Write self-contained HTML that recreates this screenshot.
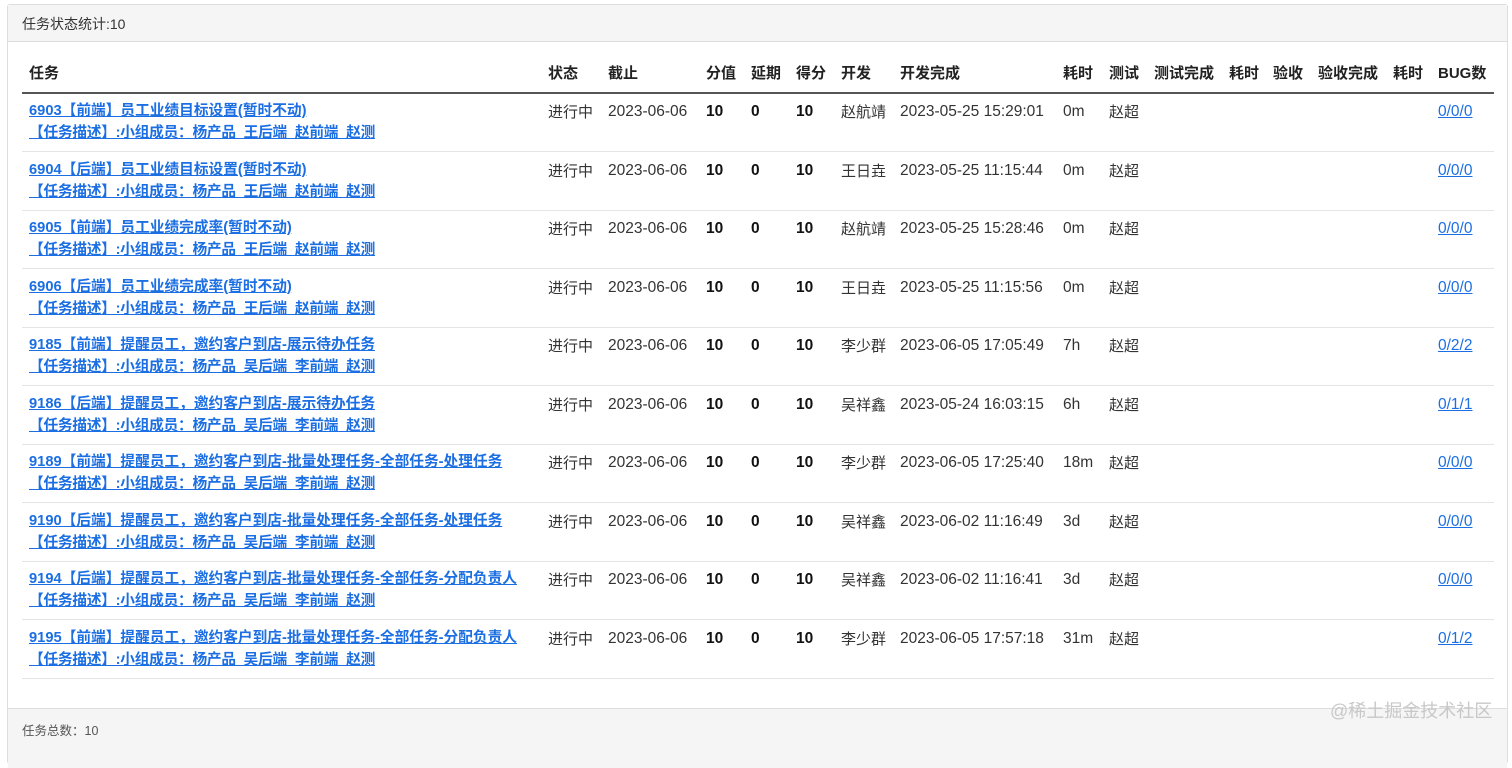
<!DOCTYPE html>
<html><head><meta charset="utf-8"><style>
*{margin:0;padding:0;box-sizing:border-box}
body{width:1512px;height:741px;background:#fff;font-family:"Liberation Sans","Noto Sans CJK SC",sans-serif;font-size:15px;color:#333;position:relative;overflow:hidden}
.panel{position:absolute;left:7px;top:4px;width:1501px;height:760px;border:1px solid #ddd;border-radius:3px}
.ph{position:absolute;left:0;top:0;right:0;height:37px;background:#f5f5f5;border-bottom:1px solid #ddd;padding:9px 14px;font-size:14px;color:#333}
.pf{position:absolute;left:0;top:703px;right:0;height:60px;background:#f5f5f5;border-top:1px solid #ddd;padding:11px 14px;font-size:12.5px;color:#555}
.c{position:absolute;white-space:nowrap;line-height:20px}
.th{font-weight:bold;color:#222;top:64px}
.hl{position:absolute;left:22px;top:92px;width:1472px;height:2px;background:#555}
.row{position:absolute;left:0;width:1512px;height:59px}
.row .sep{position:absolute;left:22px;width:1472px;top:57px;height:1px;background:#e4e4e4}
.row .c{top:9px}
.row .n{top:8px;font-size:15.5px}
a{color:#1c6fe3;font-weight:bold;text-decoration:underline}
.b{font-weight:bold;color:#111}
.bug{color:#1c6fe3;text-decoration:underline}
.wm{position:absolute;left:1330px;top:697px;font-size:18px;color:#c8c8c8}
.row .t{line-height:22px;top:6px;font-size:14.7px}
.t a+br+a{letter-spacing:-0.25px}
</style></head><body>
<div class="panel"><div class="ph">任务状态统计:10</div><div class="pf">任务总数：10</div></div>
<div class="c th" style="left:29px">任务</div>
<div class="c th" style="left:548px">状态</div>
<div class="c th" style="left:608px">截止</div>
<div class="c th" style="left:706px">分值</div>
<div class="c th" style="left:751px">延期</div>
<div class="c th" style="left:796px">得分</div>
<div class="c th" style="left:841px">开发</div>
<div class="c th" style="left:900px">开发完成</div>
<div class="c th" style="left:1063px">耗时</div>
<div class="c th" style="left:1109px">测试</div>
<div class="c th" style="left:1154px">测试完成</div>
<div class="c th" style="left:1229px">耗时</div>
<div class="c th" style="left:1273px">验收</div>
<div class="c th" style="left:1318px">验收完成</div>
<div class="c th" style="left:1393px">耗时</div>
<div class="c th" style="left:1438px">BUG数</div>
<div class="hl"></div>

<div class="row" style="top:94px"><div class="c t" style="left:29px"><a>6903【前端】员工业绩目标设置(暂时不动)</a><br><a>【任务描述】:小组成员：杨产品_王后端_赵前端_赵测</a></div><div class="c" style="left:548px">进行中</div><div class="c n" style="left:608px">2023-06-06</div><div class="c n b" style="left:706px">10</div><div class="c n b" style="left:751px">0</div><div class="c n b" style="left:796px">10</div><div class="c" style="left:841px">赵航靖</div><div class="c n" style="left:900px">2023-05-25 15:29:01</div><div class="c n" style="left:1063px">0m</div><div class="c" style="left:1109px">赵超</div><div class="c n bug" style="left:1438px">0/0/0</div><div class="sep"></div></div>

<div class="row" style="top:152.5px"><div class="c t" style="left:29px"><a>6904【后端】员工业绩目标设置(暂时不动)</a><br><a>【任务描述】:小组成员：杨产品_王后端_赵前端_赵测</a></div><div class="c" style="left:548px">进行中</div><div class="c n" style="left:608px">2023-06-06</div><div class="c n b" style="left:706px">10</div><div class="c n b" style="left:751px">0</div><div class="c n b" style="left:796px">10</div><div class="c" style="left:841px">王日垚</div><div class="c n" style="left:900px">2023-05-25 11:15:44</div><div class="c n" style="left:1063px">0m</div><div class="c" style="left:1109px">赵超</div><div class="c n bug" style="left:1438px">0/0/0</div><div class="sep"></div></div>

<div class="row" style="top:211px"><div class="c t" style="left:29px"><a>6905【前端】员工业绩完成率(暂时不动)</a><br><a>【任务描述】:小组成员：杨产品_王后端_赵前端_赵测</a></div><div class="c" style="left:548px">进行中</div><div class="c n" style="left:608px">2023-06-06</div><div class="c n b" style="left:706px">10</div><div class="c n b" style="left:751px">0</div><div class="c n b" style="left:796px">10</div><div class="c" style="left:841px">赵航靖</div><div class="c n" style="left:900px">2023-05-25 15:28:46</div><div class="c n" style="left:1063px">0m</div><div class="c" style="left:1109px">赵超</div><div class="c n bug" style="left:1438px">0/0/0</div><div class="sep"></div></div>

<div class="row" style="top:269.5px"><div class="c t" style="left:29px"><a>6906【后端】员工业绩完成率(暂时不动)</a><br><a>【任务描述】:小组成员：杨产品_王后端_赵前端_赵测</a></div><div class="c" style="left:548px">进行中</div><div class="c n" style="left:608px">2023-06-06</div><div class="c n b" style="left:706px">10</div><div class="c n b" style="left:751px">0</div><div class="c n b" style="left:796px">10</div><div class="c" style="left:841px">王日垚</div><div class="c n" style="left:900px">2023-05-25 11:15:56</div><div class="c n" style="left:1063px">0m</div><div class="c" style="left:1109px">赵超</div><div class="c n bug" style="left:1438px">0/0/0</div><div class="sep"></div></div>

<div class="row" style="top:328px"><div class="c t" style="left:29px"><a>9185【前端】提醒员工，邀约客户到店-展示待办任务</a><br><a>【任务描述】:小组成员：杨产品_吴后端_李前端_赵测</a></div><div class="c" style="left:548px">进行中</div><div class="c n" style="left:608px">2023-06-06</div><div class="c n b" style="left:706px">10</div><div class="c n b" style="left:751px">0</div><div class="c n b" style="left:796px">10</div><div class="c" style="left:841px">李少群</div><div class="c n" style="left:900px">2023-06-05 17:05:49</div><div class="c n" style="left:1063px">7h</div><div class="c" style="left:1109px">赵超</div><div class="c n bug" style="left:1438px">0/2/2</div><div class="sep"></div></div>

<div class="row" style="top:386.5px"><div class="c t" style="left:29px"><a>9186【后端】提醒员工，邀约客户到店-展示待办任务</a><br><a>【任务描述】:小组成员：杨产品_吴后端_李前端_赵测</a></div><div class="c" style="left:548px">进行中</div><div class="c n" style="left:608px">2023-06-06</div><div class="c n b" style="left:706px">10</div><div class="c n b" style="left:751px">0</div><div class="c n b" style="left:796px">10</div><div class="c" style="left:841px">吴祥鑫</div><div class="c n" style="left:900px">2023-05-24 16:03:15</div><div class="c n" style="left:1063px">6h</div><div class="c" style="left:1109px">赵超</div><div class="c n bug" style="left:1438px">0/1/1</div><div class="sep"></div></div>

<div class="row" style="top:445px"><div class="c t" style="left:29px"><a>9189【前端】提醒员工，邀约客户到店-批量处理任务-全部任务-处理任务</a><br><a>【任务描述】:小组成员：杨产品_吴后端_李前端_赵测</a></div><div class="c" style="left:548px">进行中</div><div class="c n" style="left:608px">2023-06-06</div><div class="c n b" style="left:706px">10</div><div class="c n b" style="left:751px">0</div><div class="c n b" style="left:796px">10</div><div class="c" style="left:841px">李少群</div><div class="c n" style="left:900px">2023-06-05 17:25:40</div><div class="c n" style="left:1063px">18m</div><div class="c" style="left:1109px">赵超</div><div class="c n bug" style="left:1438px">0/0/0</div><div class="sep"></div></div>

<div class="row" style="top:503.5px"><div class="c t" style="left:29px"><a>9190【后端】提醒员工，邀约客户到店-批量处理任务-全部任务-处理任务</a><br><a>【任务描述】:小组成员：杨产品_吴后端_李前端_赵测</a></div><div class="c" style="left:548px">进行中</div><div class="c n" style="left:608px">2023-06-06</div><div class="c n b" style="left:706px">10</div><div class="c n b" style="left:751px">0</div><div class="c n b" style="left:796px">10</div><div class="c" style="left:841px">吴祥鑫</div><div class="c n" style="left:900px">2023-06-02 11:16:49</div><div class="c n" style="left:1063px">3d</div><div class="c" style="left:1109px">赵超</div><div class="c n bug" style="left:1438px">0/0/0</div><div class="sep"></div></div>

<div class="row" style="top:562px"><div class="c t" style="left:29px"><a>9194【后端】提醒员工，邀约客户到店-批量处理任务-全部任务-分配负责人</a><br><a>【任务描述】:小组成员：杨产品_吴后端_李前端_赵测</a></div><div class="c" style="left:548px">进行中</div><div class="c n" style="left:608px">2023-06-06</div><div class="c n b" style="left:706px">10</div><div class="c n b" style="left:751px">0</div><div class="c n b" style="left:796px">10</div><div class="c" style="left:841px">吴祥鑫</div><div class="c n" style="left:900px">2023-06-02 11:16:41</div><div class="c n" style="left:1063px">3d</div><div class="c" style="left:1109px">赵超</div><div class="c n bug" style="left:1438px">0/0/0</div><div class="sep"></div></div>

<div class="row" style="top:620.5px"><div class="c t" style="left:29px"><a>9195【前端】提醒员工，邀约客户到店-批量处理任务-全部任务-分配负责人</a><br><a>【任务描述】:小组成员：杨产品_吴后端_李前端_赵测</a></div><div class="c" style="left:548px">进行中</div><div class="c n" style="left:608px">2023-06-06</div><div class="c n b" style="left:706px">10</div><div class="c n b" style="left:751px">0</div><div class="c n b" style="left:796px">10</div><div class="c" style="left:841px">李少群</div><div class="c n" style="left:900px">2023-06-05 17:57:18</div><div class="c n" style="left:1063px">31m</div><div class="c" style="left:1109px">赵超</div><div class="c n bug" style="left:1438px">0/1/2</div><div class="sep"></div></div>

<div class="wm">@稀土掘金技术社区</div>
</body></html>
